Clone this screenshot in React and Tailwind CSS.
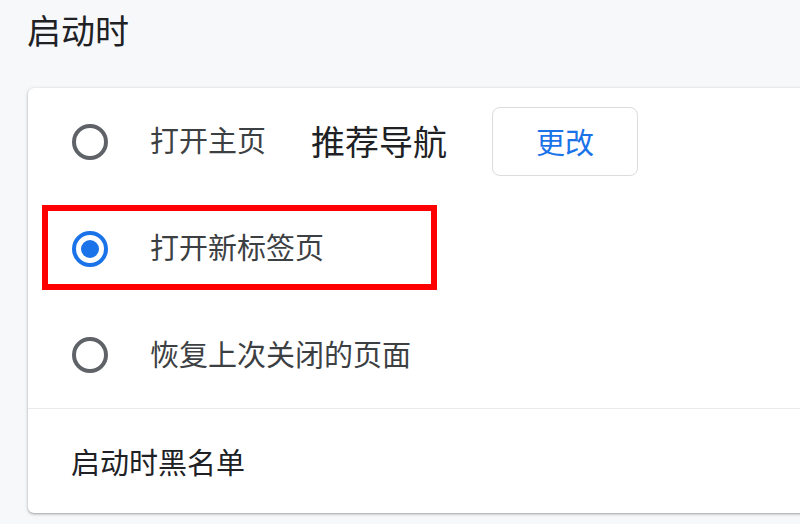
export default function App() {
  const font = { fontFamily: '"Microsoft YaHei", "Noto Sans CJK SC", "Noto Sans", sans-serif' };
  const Radio = ({ checked }) =>
    checked ? (
      <div className="w-[36px] h-[36px] rounded-full border-[4px] border-[#1a73e8] flex items-center justify-center shrink-0">
        <div className="w-[18px] h-[18px] rounded-full bg-[#1a73e8]" />
      </div>
    ) : (
      <div className="w-[36px] h-[36px] rounded-full border-[4px] border-[#5f6368] shrink-0" />
    );

  return (
    <div className="w-[800px] h-[524px] overflow-hidden bg-[#f7f8fa] text-[#202124]" style={font}>
      <div className="h-[88px] pl-[27px] pt-[13px]">
        <div className="text-[34px] leading-[34px] text-[#202124]">启动时</div>
      </div>
      <div className="ml-[28px] w-[800px] bg-white rounded-[6px] shadow-[0_1px_2px_0_rgba(60,64,67,0.3),0_1px_3px_1px_rgba(60,64,67,0.15)]">
        <div className="h-[107px] flex items-center pl-[44px]">
          <Radio />
          <span className="ml-[42px] mb-[4px] text-[29px] leading-none text-[#3c4043]">打开主页</span>
          <span className="ml-[45px] mb-[2px] text-[34px] leading-none text-[#202124]">推荐导航</span>
          <button className="ml-[45px] w-[146px] h-[69px] rounded-[8px] border border-[#dadce0] bg-white text-[29px] leading-none text-[#1a73e8]">
            更改
          </button>
        </div>
        <div className="relative h-[107px] flex items-center pl-[44px]">
          <Radio checked />
          <span className="ml-[42px] mb-[4px] text-[29px] leading-none text-[#3c4043]">打开新标签页</span>
          <div className="absolute left-[14px] top-[10px] w-[395px] h-[85px] border-[6px] border-[#ff0000]" />
        </div>
        <div className="h-[106px] flex items-center pl-[44px]">
          <Radio />
          <span className="ml-[42px] mb-[4px] text-[29px] leading-none text-[#3c4043]">恢复上次关闭的页面</span>
        </div>
        <div className="h-px bg-[#e8eaed]" />
        <div className="h-[104px] flex items-center pl-[43px]">
          <span className="text-[29px] leading-none text-[#202124]">启动时黑名单</span>
        </div>
      </div>
    </div>
  );
}
